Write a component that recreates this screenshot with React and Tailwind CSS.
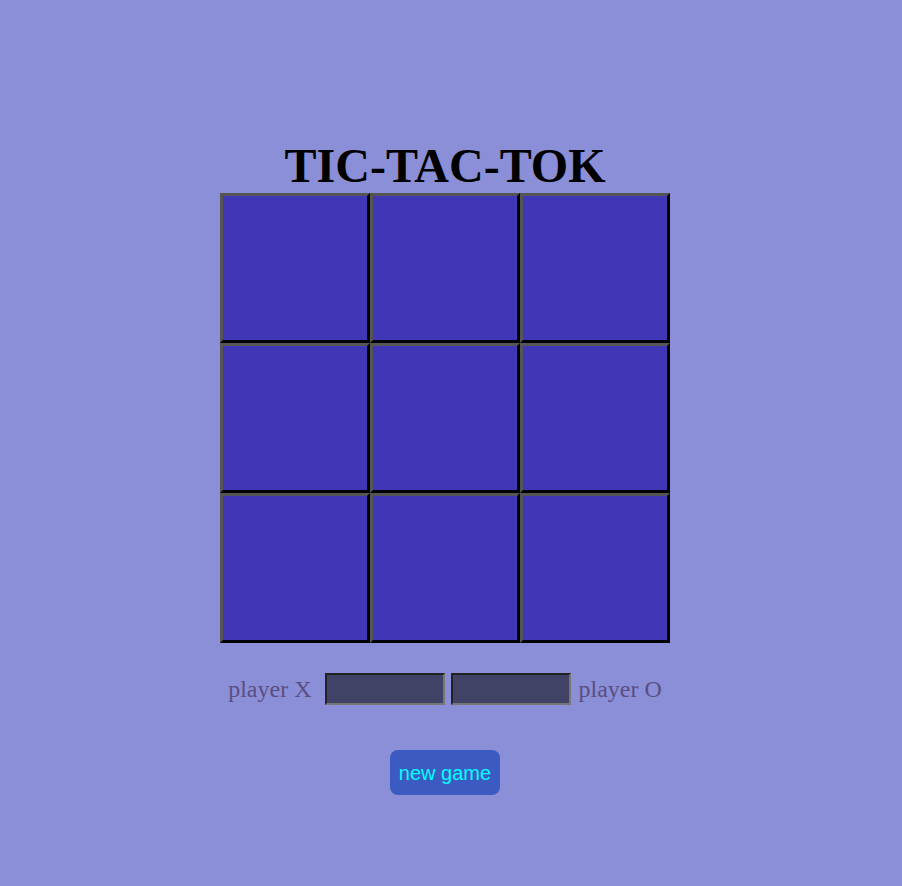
export default function App() {
  const cells = Array.from({ length: 9 });
  return (
    <div className="min-h-[886px] w-full bg-[#8a8fd8] font-['Liberation_Serif',serif]">
      <div className="flex w-[890px] flex-col items-center pt-[138px]">
        <h1 className="m-0 text-[48px] font-bold leading-[55px] text-black">TIC-TAC-TOK</h1>
        <div className="grid w-[450px] grid-cols-3">
          {cells.map((_, i) => (
            <button
              key={i}
              className="h-[150px] w-[150px] border-[3px] border-t-[#555555] border-l-[#555555] border-r-black border-b-black bg-[#3f37b5]"
            />
          ))}
        </div>
        <div className="mt-[30px] flex h-[32px] items-center text-[24px] leading-[28px] text-[#5a4e80]">
          <span className="mr-[13px]">player X</span>
          <input className="h-[32px] w-[120px] border-2 border-t-[#222222] border-l-[#222222] border-r-[#777777] border-b-[#777777] bg-[#404366] outline-none" />
          <input className="ml-[6px] h-[32px] w-[120px] border-2 border-t-[#222222] border-l-[#222222] border-r-[#777777] border-b-[#777777] bg-[#404366] outline-none" />
          <span className="ml-[8px]">player O</span>
        </div>
        <button className="mt-[45px] h-[45px] w-[110px] rounded-[8px] bg-[#3b5bc2] font-['Liberation_Sans',Arial,sans-serif] text-[20px] text-[#00ffff]">
          new game
        </button>
      </div>
    </div>
  );
}
